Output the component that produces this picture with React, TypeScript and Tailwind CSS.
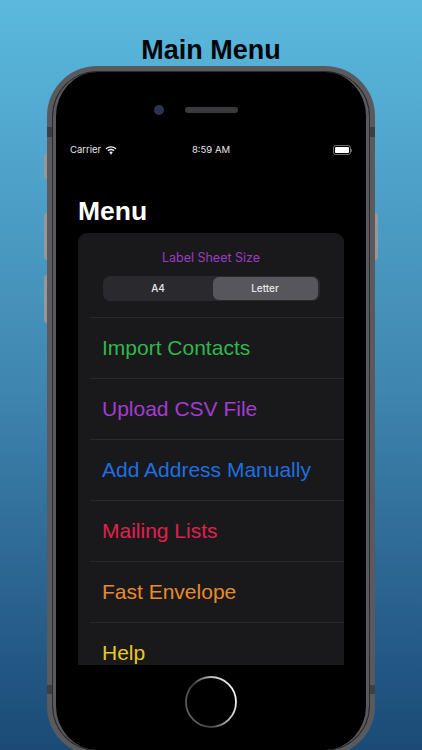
import React from "react";

const menuItems = [
  { label: "Import Contacts", color: "text-[#2fb84c]" },
  { label: "Upload CSV File", color: "text-[#a53ccf]" },
  { label: "Add Address Manually", color: "text-[#1f6fe0]" },
  { label: "Mailing Lists", color: "text-[#e0204e]" },
  { label: "Fast Envelope", color: "text-[#ea8a28]" },
  { label: "Help", color: "text-[#eac722]" },
];

function WifiIcon() {
  return (
    <svg width="12" height="9" viewBox="0 0 12 9" fill="#f0f0f0">
      <path d="M6 1.6c1.7 0 3.3.7 4.5 1.8l.9-.95C9.900 1 8 .2 6 .2S2.100 1 .6 2.450l.9.950C2.700 2.300 4.300 1.600 6 1.600z" />
      <path d="M6 4.200c1 0 1.900.4 2.600 1l.95-.95C8.600 3.350 7.350 2.800 6 2.800s-2.600.55-3.550 1.450l.95.95c.7-.6 1.600-1 2.600-1z" />
      <path d="M6 5.400c-.7 0-1.300.250-1.750.7L6 8.800l1.750-2.700C7.300 5.650 6.700 5.400 6 5.400z" />
    </svg>
  );
}

function HomeRing() {
  return (
    <svg width="52" height="52" viewBox="0 0 52 52" fill="none">
      <defs>
        <linearGradient id="ring" x1="1" y1="0.25" x2="0" y2="0.65">
          <stop offset="0" stopColor="#ffffff" />
          <stop offset="0.35" stopColor="#b8b8b8" />
          <stop offset="0.7" stopColor="#404040" />
          <stop offset="1" stopColor="#606060" />
        </linearGradient>
      </defs>
      <circle cx="26" cy="26" r="25" stroke="url(#ring)" strokeWidth="1.800" />
    </svg>
  );
}

export default function App() {
  return (
    <div className="relative h-[750px] w-[422px] overflow-hidden bg-gradient-to-b from-[#5bb9de] via-[#4088b2] to-[#1b4a76] font-['Inter',sans-serif]">
      <h1 className="flex h-[66px] items-end justify-center font-['Liberation_Sans',sans-serif] text-[27px] leading-[32px] font-bold text-[#020508]">
        Main Menu
      </h1>

      {/* side buttons */}
      <div className="absolute top-[153px] left-[44px] h-[26px] w-[3px] rounded-l-sm bg-[#96969b]" />
      <div className="absolute top-[213px] left-[44px] h-[47px] w-[3px] rounded-l-sm bg-[#96969b]" />
      <div className="absolute top-[275px] left-[44px] h-[48px] w-[3px] rounded-l-sm bg-[#96969b]" />
      <div className="absolute top-[213px] left-[375px] h-[47px] w-[3px] rounded-r-sm bg-[#96969b]" />

      {/* phone body */}
      <div className="relative mx-[47px] h-[690px] w-[328px] rounded-[50px] bg-[#5a5a5e] p-[5px]">
        <div className="absolute top-[61px] left-0 h-[10px] w-[5px] bg-[#3f3f43]" />
        <div className="absolute top-[61px] right-0 h-[10px] w-[5px] bg-[#3f3f43]" />
        <div className="absolute top-[619px] left-0 h-[9px] w-[5px] bg-[#3f3f43]" />
        <div className="absolute top-[619px] right-0 h-[9px] w-[5px] bg-[#3f3f43]" />

        <div className="h-full rounded-[45px] border border-[#2a2a2c] bg-black">
          <div className="flex h-full flex-col rounded-[44px] border-x-[3px] border-[#5a5a5e] bg-black">
            {/* camera and speaker */}
            <div className="flex h-[43px] items-end pl-[98px]">
              <div className="flex h-[10px] w-[10px] items-center justify-center rounded-full bg-[#34343c]">
                <div className="h-[5px] w-[5px] rounded-full bg-[#1c3278]" />
              </div>
              <div className="mb-[2px] ml-[21px] h-[6px] w-[53px] rounded-full bg-[#3a3a3c]" />
            </div>

            {/* status bar */}
            <div className="mt-[29px] flex h-[12px] items-center justify-between px-[14px] text-[9.500px] leading-[12px] text-[#e8e8e8]">
              <div className="flex w-[70px] items-center gap-[4px]">
                <span>Carrier</span>
                <WifiIcon />
              </div>
              <span>8:59 AM</span>
              <div className="flex w-[70px] items-center justify-end">
                <div className="flex h-[10px] w-[18px] items-center rounded-[3px] border border-[#6f6f72] p-[1px]">
                  <div className="h-full w-full rounded-[1px] bg-white" />
                </div>
                <div className="h-[3px] w-[1px] rounded-r-sm bg-[#6f6f72]" />
              </div>
            </div>

            {/* screen */}
            <div className="flex min-h-0 flex-1 flex-col px-[22px]">
              <h2 className="mt-[39px] font-['Liberation_Sans',sans-serif] text-[26.500px] leading-[32px] font-bold text-white">Menu</h2>
              <div className="mt-[6px] h-[432px] overflow-hidden rounded-t-[9px] bg-[#19191b]">
                <div className="flex h-[84px] flex-col items-center">
                  <p className="mt-[17px] text-[12.500px] leading-[16px] text-[#9a3cc0]">Label Sheet Size</p>
                  <div className="mt-[10px] flex h-[25px] w-[217px] rounded-[7px] bg-[#2a2a2e] p-[1px] text-[10px] font-medium text-[#e8e8e8]">
                    <div className="flex flex-1 items-center justify-center">A4</div>
                    <div className="mr-[1px] flex w-[105px] items-center justify-center rounded-[6px] bg-[#56565c]">Letter</div>
                  </div>
                </div>
                {menuItems.map((item) => (
                  <div key={item.label} className="ml-[12px] h-[61px] border-t border-[#29292b] pt-[16px] pl-[12px]">
                    <p className={`font-['Liberation_Sans',sans-serif] text-[21px] leading-[28px] ${item.color}`}>{item.label}</p>
                  </div>
                ))}
              </div>
            </div>

            {/* home button */}
            <div className="flex h-[76px] justify-center pt-[2px]">
              <HomeRing />
            </div>
          </div>
        </div>
      </div>
    </div>
  );
}
